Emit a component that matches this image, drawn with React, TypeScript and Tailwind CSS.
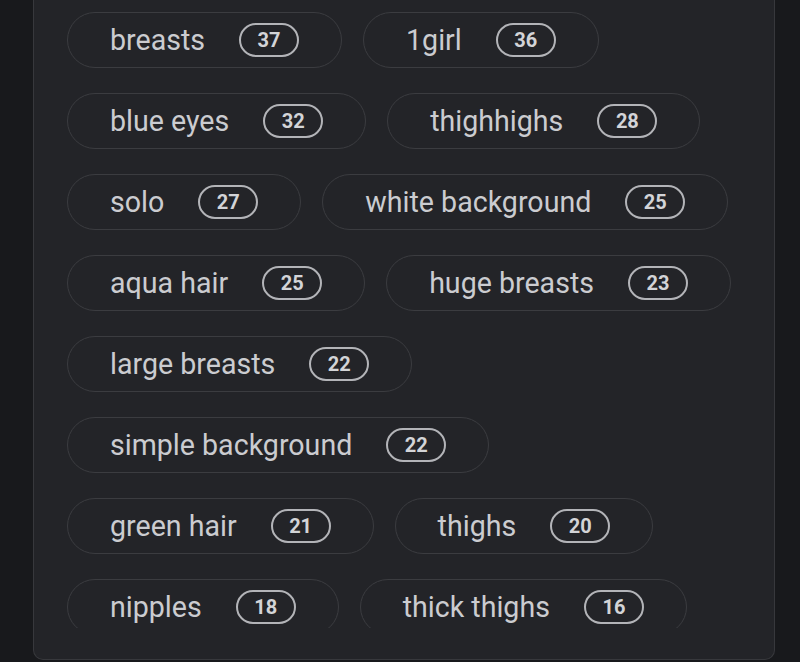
const tags: [string, number][] = [
  ["breasts", 37],
  ["1girl", 36],
  ["blue eyes", 32],
  ["thighhighs", 28],
  ["solo", 27],
  ["white background", 25],
  ["aqua hair", 25],
  ["huge breasts", 23],
  ["large breasts", 22],
  ["simple background", 22],
  ["green hair", 21],
  ["thighs", 20],
  ["nipples", 18],
  ["thick thighs", 16],
];

function Tag({ name, count }: { name: string; count: number }) {
  return (
    <div className="flex h-[56px] items-center gap-[34px] rounded-full border border-[#3b3c40] pl-[42px] pr-[42px]">
      <span className="text-[28.6px] leading-none text-[#cbccd0]">{name}</span>
      <span className="flex h-[34px] items-center rounded-full border-2 border-[#b3b4b8] px-[16.5px] text-[20px] font-bold leading-none text-[#d3d4d7]">
        {count}
      </span>
    </div>
  );
}

export default function App() {
  return (
    <div className="h-[662px] w-[800px] overflow-hidden bg-[#18191c] font-['Roboto',sans-serif]">
      <div className="ml-[33px] h-[660px] w-[742px] rounded-b-[10px] border-x border-b border-[#37383c] bg-[#232428] px-[33px] pt-[12px]">
        <div className="flex h-[616px] flex-wrap content-start gap-x-[21px] gap-y-[25px] overflow-hidden">
          {tags.map(([name, count]) => (
            <Tag key={name} name={name} count={count} />
          ))}
        </div>
      </div>
    </div>
  );
}
